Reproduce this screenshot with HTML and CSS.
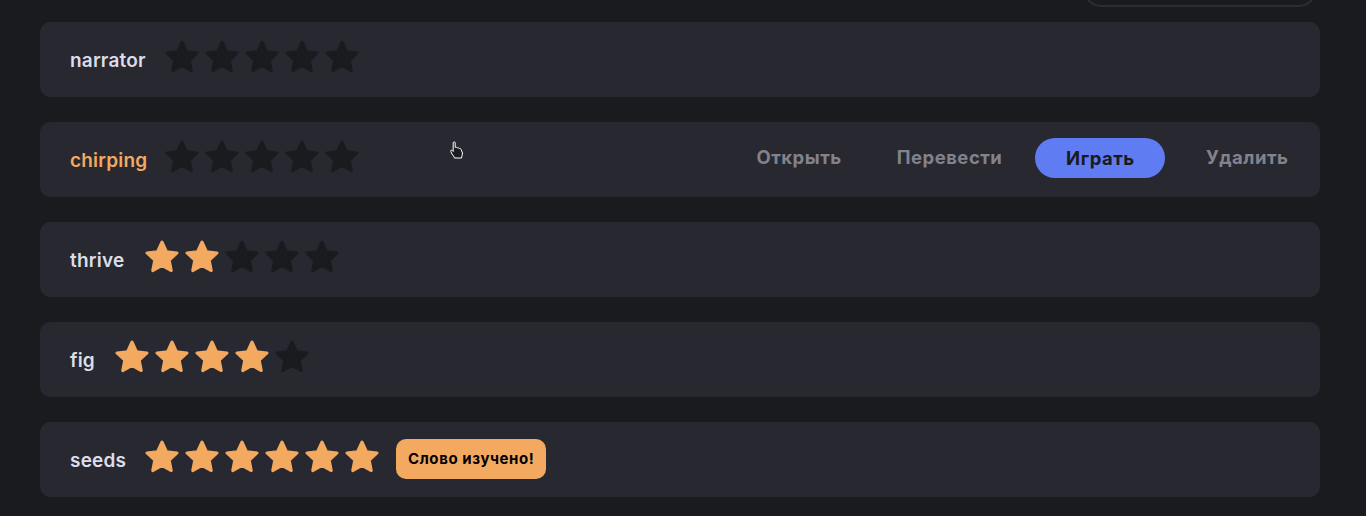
FILE: index.html
```html
<!DOCTYPE html>
<html lang="ru">
<head>
    <meta charset="UTF-8">
    <meta name="viewport" content="width=device-width, initial-scale=1.0">
    <title>Мои слова</title>
    <link rel="stylesheet" href="styles.css">
</head>
<body>
    <svg class="defs" width="0" height="0">
        <symbol id="star" viewBox="0 0 34 34">
            <polygon points="17,2 21.47,11.65 32.03,12.92 24.23,20.15 26.29,30.58 17,25.4 7.71,30.58 9.77,20.15 1.97,12.92 12.53,11.65" fill="currentColor" stroke="currentColor" stroke-width="3" stroke-linejoin="round"/>
        </symbol>
    </svg>

    <div class="top-bar">
        <div class="search-pill"></div>
    </div>

    <div class="word-list">
        <div class="word-row">
            <span class="word word-long">narrator</span>
            <div class="stars">
                <svg class="star"><use href="#star"/></svg>
                <svg class="star"><use href="#star"/></svg>
                <svg class="star"><use href="#star"/></svg>
                <svg class="star"><use href="#star"/></svg>
                <svg class="star"><use href="#star"/></svg>
            </div>
        </div>

        <div class="word-row">
            <span class="word word-long word-active">chirping</span>
            <div class="stars">
                <svg class="star"><use href="#star"/></svg>
                <svg class="star"><use href="#star"/></svg>
                <svg class="star"><use href="#star"/></svg>
                <svg class="star"><use href="#star"/></svg>
                <svg class="star"><use href="#star"/></svg>
            </div>
            <div class="actions">
                <a class="action action-open" href="#">Открыть</a>
                <a class="action" href="#">Перевести</a>
                <button class="play-button" type="button">Играть</button>
                <a class="action action-delete" href="#">Удалить</a>
            </div>
        </div>

        <div class="word-row">
            <span class="word word-mid">thrive</span>
            <div class="stars">
                <svg class="star filled"><use href="#star"/></svg>
                <svg class="star filled"><use href="#star"/></svg>
                <svg class="star"><use href="#star"/></svg>
                <svg class="star"><use href="#star"/></svg>
                <svg class="star"><use href="#star"/></svg>
            </div>
        </div>

        <div class="word-row">
            <span class="word word-short">fig</span>
            <div class="stars">
                <svg class="star filled"><use href="#star"/></svg>
                <svg class="star filled"><use href="#star"/></svg>
                <svg class="star filled"><use href="#star"/></svg>
                <svg class="star filled"><use href="#star"/></svg>
                <svg class="star"><use href="#star"/></svg>
            </div>
        </div>

        <div class="word-row">
            <span class="word word-mid">seeds</span>
            <div class="stars">
                <svg class="star filled"><use href="#star"/></svg>
                <svg class="star filled"><use href="#star"/></svg>
                <svg class="star filled"><use href="#star"/></svg>
                <svg class="star filled"><use href="#star"/></svg>
                <svg class="star filled"><use href="#star"/></svg>
                <svg class="star filled"><use href="#star"/></svg>
            </div>
            <span class="learned-badge">Слово изучено!</span>
        </div>
    </div>

    <!-- курсор поверх страницы -->
    <svg class="cursor" width="14" height="18" viewBox="0 0 14 18">
        <path d="M3.2 1.8c0-1.3 2-1.300 2 0v4.700c.8-.6 1.800-.3 2 .5.800-.5 1.800-.2 2 .6.700-.4 1.800 0 1.900 1L12.500 12c0 2-.8 3-1 5H4.500c-.3-1.500-1.500-2.500-2.500-4L.8 10.500c-.6-1 .7-1.900 1.500-1l.9 1z" fill="#1a1b1f" stroke="#ffffff" stroke-width="1" stroke-linejoin="round"/>
    </svg>
</body>
</html>
```

FILE: styles.css
```css
body {
    margin: 0;
    padding: 0 46px 19px 40px;
    background-color: #1a1b1f;
    font-family: Inter, "Noto Sans", sans-serif;
    overflow: hidden;
}
.defs {
    position: absolute;
}
.top-bar {
    display: flex;
    justify-content: flex-end;
    height: 22px;
    overflow: hidden;
}
.search-pill {
    flex: none;
    width: 236px;
    height: 40px;
    margin-top: -33px;
    margin-right: 2px;
    box-sizing: border-box;
    border: 2px solid #2a2b33;
    border-radius: 20px;
}
.word-list {
    display: flex;
    flex-direction: column;
    gap: 25px;
    width: 1280px;
}
.word-row {
    display: flex;
    align-items: center;
    height: 75px;
    padding: 0 31.5px 0 30px;
    background-color: #272830;
    border-radius: 10px;
}
.word {
    flex: none;
    padding-top: 1px;
    font-size: 19px;
    font-weight: 600;
    letter-spacing: .2px;
    color: #dcdde8;
}
.word-long {
    width: 94.5px;
}
.word-mid {
    width: 74.5px;
}
.word-short {
    width: 44.5px;
}
.word-active {
    color: #f3aa60;
}
.stars {
    display: flex;
    gap: 6px;
    margin-bottom: 5px;
}
.star {
    width: 34px;
    height: 34px;
    color: #1a1b1f;
}
.star.filled {
    color: #f3aa60;
}
.actions {
    display: flex;
    align-items: center;
    gap: 33px;
    margin-left: auto;
    margin-bottom: 3px;
}
.action {
    padding-bottom: 2px;
    font-size: 18.5px;
    font-weight: 700;
    letter-spacing: .5px;
    color: #82828c;
    text-decoration: none;
}
.action-open {
    margin-right: 22px;
}
.action-delete {
    margin-left: 7.5px;
}
.play-button {
    width: 130px;
    height: 40px;
    background-color: #5f7cf2;
    color: #1a1b1f;
    font-family: inherit;
    font-size: 18.5px;
    font-weight: 700;
    letter-spacing: .5px;
    border: none;
    border-radius: 20px;
    cursor: pointer;
}
.learned-badge {
    margin-left: 17.5px;
    margin-bottom: 1px;
    padding: 0 12px;
    line-height: 40px;
    background-color: #f3aa60;
    color: #000000;
    font-size: 15px;
    font-weight: 700;
    letter-spacing: .6px;
    border-radius: 10px;
}
.cursor {
    position: absolute;
    left: 450px;
    top: 141px;
}
```
